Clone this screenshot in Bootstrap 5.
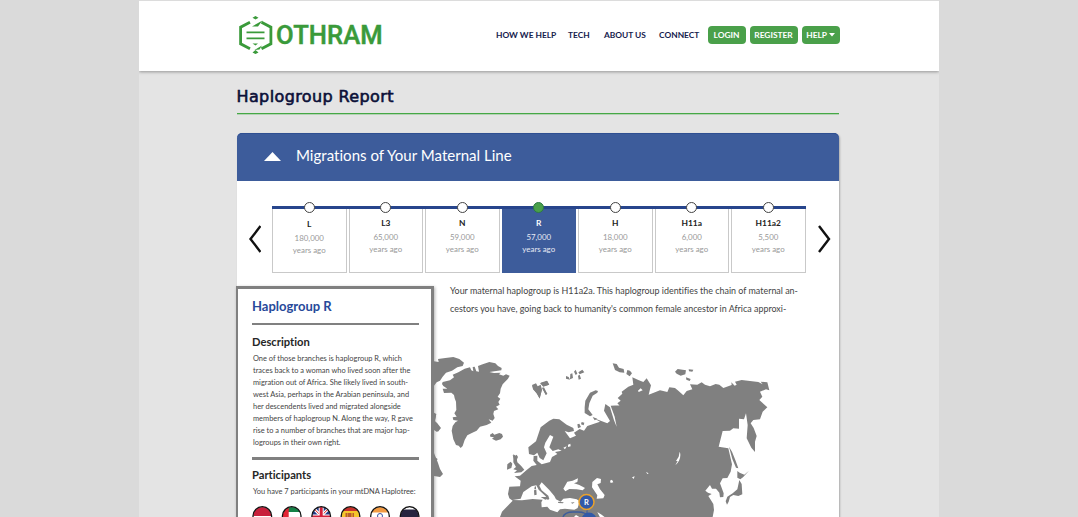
<!DOCTYPE html>
<html lang="en">
<head>
<meta charset="utf-8">
<meta name="viewport" content="width=device-width, initial-scale=1">
<title>Othram - Haplogroup Report</title>
<link href="https://cdn.jsdelivr.net/npm/bootstrap@5.3.0/dist/css/bootstrap.min.css" rel="stylesheet">
<style>
body{background:#dadada;font-family:Lato,sans-serif;color:#444;height:517px;overflow:hidden;font-variant-ligatures:none}
.page{width:800px;height:517px;background:#e4e4e4;border-top:1px solid #dcdcdc;overflow:hidden}
.topbar{height:70px;background:#fff;box-shadow:0 1px 3px rgba(0,0,0,.35);padding:0 99.5px 2px 99px}
.brand-name{font:500 25.6px/1 Roboto,sans-serif;-webkit-text-stroke:.5px #3a9a3a;letter-spacing:.1px;color:#3a9a3a;margin-left:3px;padding-top:2px}
.menu a{font-size:8.4px;font-weight:700;color:#16214d;text-decoration:none;line-height:17px;white-space:nowrap}
.menu .btn{background:#4aa04a;color:#fff;border:0;border-radius:4px;padding:0;height:18px;font-size:8.4px;line-height:17px;font-weight:700}
.title{font:400 16px/20px "DejaVu Sans",sans-serif;-webkit-text-stroke:.6px #0b1038;color:#0b1038;letter-spacing:.38px;margin:0 0 0 -.5px;padding-top:16px;height:43px;border-bottom:1px solid #45a845;box-shadow:0 1px rgba(69,168,69,.3);white-space:nowrap}
.main{width:601.5px;margin-left:98px}
.panel{margin-top:19px;height:400px;background:#fff;border-radius:5px 5px 0 0;box-shadow:1px 1px 2px rgba(0,0,0,.25)}
.panel-head{height:48px;background:#3d5c9b;border-radius:5px 5px 0 0;color:#fff;font-size:15.07px;padding:0 0 3px 27px;box-shadow:inset 0 1px #2f4f92}
.line-row{height:105px;padding-left:11px}
.timeline{width:533.5px;margin:25px 0 0 11px;height:66px;border-top:3px solid #27458c;gap:2px}
.step{flex:1 1 0;border:1px solid #c9c9c9;border-width:0 1px 1.5px;text-align:center;font-size:7.9px;line-height:12px;color:#999;height:63.500px}
.step::before{content:"";display:block;width:11px;height:11px;border:1px solid #444;border-radius:50%;background:#fff;margin:-7.500px auto 3px}
.step b{display:block;color:#222;font-size:8.4px;line-height:15px}
.step.first::before{margin-bottom:4px}
.step.on{background:#3d5c9b;border-color:#3d5c9b;color:#e6eaf4}
.step.on b{color:#fff}
.step.on::before{background:#4aa04a;border-color:#2d7a45}
.side{width:198px;height:245px;margin-left:-1px;border:3px solid #808080;border-left-width:2px;padding:9px 12px 0 14px;background:#fff;box-shadow:1px 1px 3px rgba(0,0,0,.3)}
.side h2{font-size:13px;line-height:16px;font-weight:700;color:#27499a;margin:0 0 9px}
.side h3{font-size:11.2px;line-height:14px;font-weight:700;color:#262626;margin:0}
.rule{height:2.3px;background:#808080;width:167px}
.side p{font-size:7.43px;line-height:12px;margin:0 0 0 1px;white-space:nowrap}
.intro{font-size:8.93px;line-height:18px;margin:-4px 0 0 16px;height:58px;white-space:nowrap}
</style>
</head>
<body>
<div class="page mx-auto">
<header class="topbar d-flex align-items-center">
  <svg width="35" height="40" viewBox="238 15 35 40" fill="none" stroke="#3a9a3a">
    <path stroke-width="2.800" d="M250 22.200l-9.400 5v16.600l9.400 5M261.500 22.200l9.400 5v16.600l-9.400 5"/>
    <path stroke-width="1.700" d="M246.500 32.300h18M246.500 38.300h18"/>
    <path fill="#3a9a3a" stroke="none" d="M255.500 16l3 1.700-3 1.800-3-1.800zM255.500 54l3-1.500-3-2.500-3 2.500zM252 26.500l10.500-6-4.500 6zM254.500 50l7.500-4.500-2.500 4zM252.500 43.400h5.500l-2.500 2z"/>
  </svg>
  <span class="brand-name">OTHRAM</span>
  <nav class="menu d-flex align-items-center ms-auto">
    <a href="#" style="width:72px">HOW WE HELP</a><a href="#" style="width:36px">TECH</a><a href="#" style="width:55px">ABOUT US</a><a href="#" style="width:48.500px">CONNECT</a>
    <button class="btn" style="width:38px">LOGIN</button><button class="btn" style="width:48px;margin-left:4px">REGISTER</button><button class="btn" style="width:38px;margin-left:4px">HELP <svg width="6" height="4" viewBox="0 0 6 4" style="vertical-align:1px"><path d="M0 0h6L3 3.500z" fill="#fff"/></svg></button>
  </nav>
</header>
<main class="main">
  <h1 class="title">Haplogroup Report</h1>
  <section class="panel">
    <div class="panel-head d-flex align-items-center"><svg width="17" height="9" viewBox="0 0 17 9" style="margin:2px 15px 0 0"><path d="M0 9L8.500 0 17 9z" fill="#fff"/></svg>Migrations of Your Maternal Line</div>
    <div class="line-row d-flex">
      <svg width="13" height="28" viewBox="0 0 13 28" fill="none" stroke="#111" stroke-width="2.400" style="margin-top:44px"><path d="M12.500 1L2.500 14l10 13"/></svg>
      <div class="timeline d-flex">
        <div class="step first"><b>L</b>180,000<br>years ago</div>
        <div class="step"><b>L3</b>65,000<br>years ago</div>
        <div class="step"><b>N</b>59,000<br>years ago</div>
        <div class="step on"><b>R</b>57,000<br>years ago</div>
        <div class="step"><b>H</b>18,000<br>years ago</div>
        <div class="step"><b>H11a</b>6,000<br>years ago</div>
        <div class="step"><b>H11a2</b>5,500<br>years ago</div>
      </div>
      <svg width="13" height="28" viewBox="0 0 13 28" fill="none" stroke="#111" stroke-width="2.400" style="margin:44px 0 0 12px"><path d="M1 1l10 13L1 27"/></svg>
    </div>
    <div class="d-flex">
      <aside class="side flex-shrink-0">
        <h2>Haplogroup R</h2>
        <div class="rule"></div>
        <h3 style="margin:10px 0 4px">Description</h3>
        <p>One of those branches is haplogroup R, which<br>traces back to a woman who lived soon after the<br>migration out of Africa. She likely lived in south-<br>west Asia, perhaps in the Arabian peninsula, and<br>her descendents lived and migrated alongside<br>members of haplogroup N. Along the way, R gave<br>rise to a number of branches that are major hap-<br>logroups in their own right.</p>
        <div class="rule" style="margin-top:8px"></div>
        <h3 style="margin:8px 0 4px">Participants</h3>
        <p>You have 7 participants in your mtDNA Haplotree:</p>
        <svg class="d-block" width="168" height="20" viewBox="252 506 168 20" style="margin-top:8px">
          <defs><clipPath id="c"><circle r="9"/></clipPath></defs>
          <g transform="translate(262.300 516)"><g clip-path="url(#c)"><path fill="#fff" d="M-10-10h20v20h-20z"/><path fill="#c8203c" d="M-10-10h20v10h-20z"/></g><circle r="9.300" fill="none" stroke="#111" stroke-width="1.300"/></g>
          <g transform="translate(291.700 516)"><g clip-path="url(#c)"><path fill="#fff" d="M-10-10h20v20h-20z"/><path fill="#168247" d="M-10-10h20v6h-20z"/><path fill="#e32434" d="M-10-10h7v20h-7z"/></g><circle r="9.300" fill="none" stroke="#111" stroke-width="1.300"/></g>
          <g transform="translate(321.200 516)"><g clip-path="url(#c)"><path fill="#223a86" d="M-10-10h20v20h-20z"/><path stroke="#fff" stroke-width="3" d="M-10-10l20 20M10-10l-20 20"/><path stroke="#d22" d="M-10-10l20 20M10-10l-20 20"/><path stroke="#fff" stroke-width="5" d="M0-10v20M-10 1h20"/><path stroke="#d3203a" stroke-width="3" d="M0-10v20M-10 1h20"/></g><circle r="9.300" fill="none" stroke="#111" stroke-width="1.300"/></g>
          <g transform="translate(350.500 516)"><g clip-path="url(#c)"><path fill="#f5c52b" d="M-10-10h20v20h-20z"/><path fill="#c8302c" d="M-10-10h20v5h-20z"/><path fill="#b85b2d" d="M-5-3h1.500v6H-5zM2-3h1.500v6H2zM-3-3h4v5h-4z"/></g><circle r="9.300" fill="none" stroke="#111" stroke-width="1.300"/></g>
          <g transform="translate(380 516)"><g clip-path="url(#c)"><path fill="#fff" d="M-10-10h20v20h-20z"/><path fill="#f29a42" d="M-10-10h20v6.500h-20z"/><circle r="2.500" fill="none" stroke="#3850a0"/></g><circle r="9.300" fill="none" stroke="#111" stroke-width="1.300"/></g>
          <g transform="translate(409.600 516)"><g clip-path="url(#c)"><path fill="#26243f" d="M-10-10h20v20h-20z"/><path fill="#fff" d="M-10-10h20v3.500h-20z"/></g><circle r="9.300" fill="none" stroke="#111" stroke-width="1.300"/></g>
        </svg>
      </aside>
      <div>
        <p class="intro">Your maternal haplogroup is H11a2a. This haplogroup identifies the chain of maternal an-<br>cestors you have, going back to humanity's common female ancestor in Africa approxi-</p>
        <svg class="d-block" width="404" height="177" viewBox="434 340 404 177" style="margin-left:-.5px">
          <!-- Greenland, Iceland and the Canadian islands -->
          <g transform="translate(430 340) scale(.33333)" fill="#808080">
            <path d="M38 126L60 121 72 112 68 104 85 97 104 86 120 82 124 91 130 94 128 81 134 80 139 94 147 95 144 78 158 73 178 66 196 70 204 78 215 84 214 91 178 96 192 99 212 98 207 103 220 107 228 103 239 107 234 116 218 133 212 146 210 160 203 170 211 176 205 186 209 194 198 200 205 208 192 213 190 222 194 234 188 242 176 238 184 248 170 255 150 260 140 272 124 280 112 286 104 300 98 318 92 324 86 317 78 315 70 298 65 272 68 258 76 247 84 242 70 240 68 232 80 230 73 220 79 210 78 185 74 175 72 165 64 158 42 159 38 146 52 146 40 138 36 132z"/>
            <path d="M12 64L26 66 24 57 46 54 70 51 88 57 102 68 98 78 82 82 66 92 48 98 38 110 30 122 20 127 12 137zM180 284L188 279 193 284 208 279 216 282 219 290 212 298 198 302 186 296 192 292 181 290zM12 218L19 222 14 242 22 250 33 264 24 275 12 265zM12 350L22 356V360H12zM306 135l12-5 5 9 9-5 4 15-7 26-8-14-11-14zM332 128l18-6 8 12-18 5zM338 142l14 20-5 2-10-18zM248 345l7 3 5-4 4 7-4 9h-7z"/>
          </g>
          <path fill="#808080" d="M434 413l2 2-1 7 5 6-3 4-3-2zM434 453l4 10 2 6 3 5-3 3-6-1z"/>
          <!-- Eurasia and north Africa -->
          <g transform="translate(500 360) scale(.33333)">
            <path fill="#808080" d="M0 471L6 455 38 422 28 415 24 402 28 380 60 379 62 362 44 349 60 347 80 330 95 318 110 315 100 302 101 288 112 287 112 302 125 313 150 306 156 291 172 282 165 276 185 272 175 268 158 273 148 262 160 230 150 225 136 248 132 262 140 280 130 301 119 294 112 278 102 286 87 282 85 262 108 244 122 202 148 182 160 176 178 178 200 194 220 204 222 213 206 217 194 213 210 235 228 227 222 218 239 207 252 212 262 198 300 185 280 174 322 190 330 183 312 152 316 132 330 142 342 181 350 200 344 170 332 137 358 136 372 151 352 130 362 122 353 114 367 101 365 95 385 80 400 74 397 52 415 60 430 66 440 55 453 76 446 104 480 91 502 96 508 82 525 84 535 92 550 106 560 93 577 88 570 73 592 74 605 67 615 74 630 79 647 72 658 74 670 84 695 75 694 67 704 77 710 74 705 65 725 60 775 66 788 73 782 65 802 67 808 91 798 88 780 95 787 110 778 120 802 142 788 155 780 178 760 180 752 190 761 204 770 228 765 245 765 276 754 263 740 235 743 195 738 160 732 178 717 176 717 206 700 205 690 212 668 213 656 260 685 265 696 313 692 335 682 354 668 355 660 370 671 400 670 411 660 412 658 398 648 386 636 386 630 375 616 392 624 398 635 402 625 408 640 432 642 450 638 471z"/>
            <g fill="#808080">
              <path d="M40 283l9 6 3 18 11 10 10 12-9 8-22 2 9-8-11-3 8-7-8-14zM32 305l5 6-3 13-13 5 1-16zM97 78l12-4 4 10 9-6 3 13-6 25-9-16-11-12zM120 70l23-6 4 10-17 6zM132 82l10 20-5 2-10-20zM198 48l8 3 4 8-12-3zM211 42l6-2 2 14-9 4zM222 35l5-6 5 12-5 4zM235 37l12-8 6 8-14 6zM234 47l5-3 4 12-7 3zM338 10l12 2 7 11 14 4 2 11-14-1-14-7zM382 30l8 2 6 8-7 9-10-7zM287 91L294 93 292 98 278 107 268 130 265 148 278 165 270 169 254 159 254 142 256 122 270 98zM245 186l8 2-2 8-8-3zM232 193l6-2 5 10-9 4zM278 171l14 5-8 5zM525 35l8-8 25 4-2 12-14 4-12-6zM566 28l14 1-3 6-10-1zM558 52l14 5-3 6-10-4z"/>
              <path d="M687 260L696 275 706 300 715 325 708 323 697 297zM712 333l7 5 14 6 14-12-18 20-8 6-9-5zM718 360L725 372 727 403 715 408 700 405 690 411 686 425 681 434 677 424 682 410 698 400 712 388z"/>
            </g>
            <path fill="#fff" d="M38 420l24-4 8-20 25-17 14-3 7 13 21 20 6 11 5-3-3-10-20-16-7-14 7-10 23 23 15 18 5 10 14 7 8-9 20-2 20 4 9 6-6 20-10 5-28-3-15 2-8 9-22-8-8-9-17 2-1-15 4-8-30-2-32 4zM190 386L202 365 218 362 234 355 232 366 222 370 238 375 255 384 248 391 230 388 208 387 196 394zM277 366l14-12 12 3-1 12-10 4 8 15 14 17-4 10-20 1 2-10-16-24zM292 456l13 8 10 8h-15zM222 471l6-6 10 6zM330 362l6-3 4 8-8 2zM438 336l8 4-4 2zM396 352l8-3-3 8zM528 303L536 290 539 275C544 285 540 306 526 316L533 303zM190 263l10-4-5 9zM204 254l7-3 1 8-8 2zM414 92l8-7 6 6-12 5z"/>
            <path fill="#808080" d="M104 380l4-1v9h-5zM102 391l7-2 1 15-7 2zM122 411l20 0 2 5-8 3zM175 425l16 2-2 3-15-1zM212 428l12-2-6 5z"/>
          </g>
          <path d="M563 517c1-3 5-5 10-5h5c5 0 9 2 10 5" fill="none" stroke="#3d5c9b" stroke-width="1.500"/>
          <circle cx="589" cy="520" r="7.500" fill="#3259a8"/><path d="M587 509v5" stroke="#3259a8"/>
          <circle cx="586.500" cy="502" r="7.500" fill="#3259a8" stroke="#eaa22b" stroke-width="1.500"/>
          <text x="586.500" y="504.800" text-anchor="middle" font-family="Lato,sans-serif" font-weight="700" font-size="7.500" fill="#fff">R</text>
        </svg>
      </div>
    </div>
  </section>
</main>
</div>
<script src="https://cdn.jsdelivr.net/npm/bootstrap@5.3.0/dist/js/bootstrap.bundle.min.js"></script>
</body>
</html>
